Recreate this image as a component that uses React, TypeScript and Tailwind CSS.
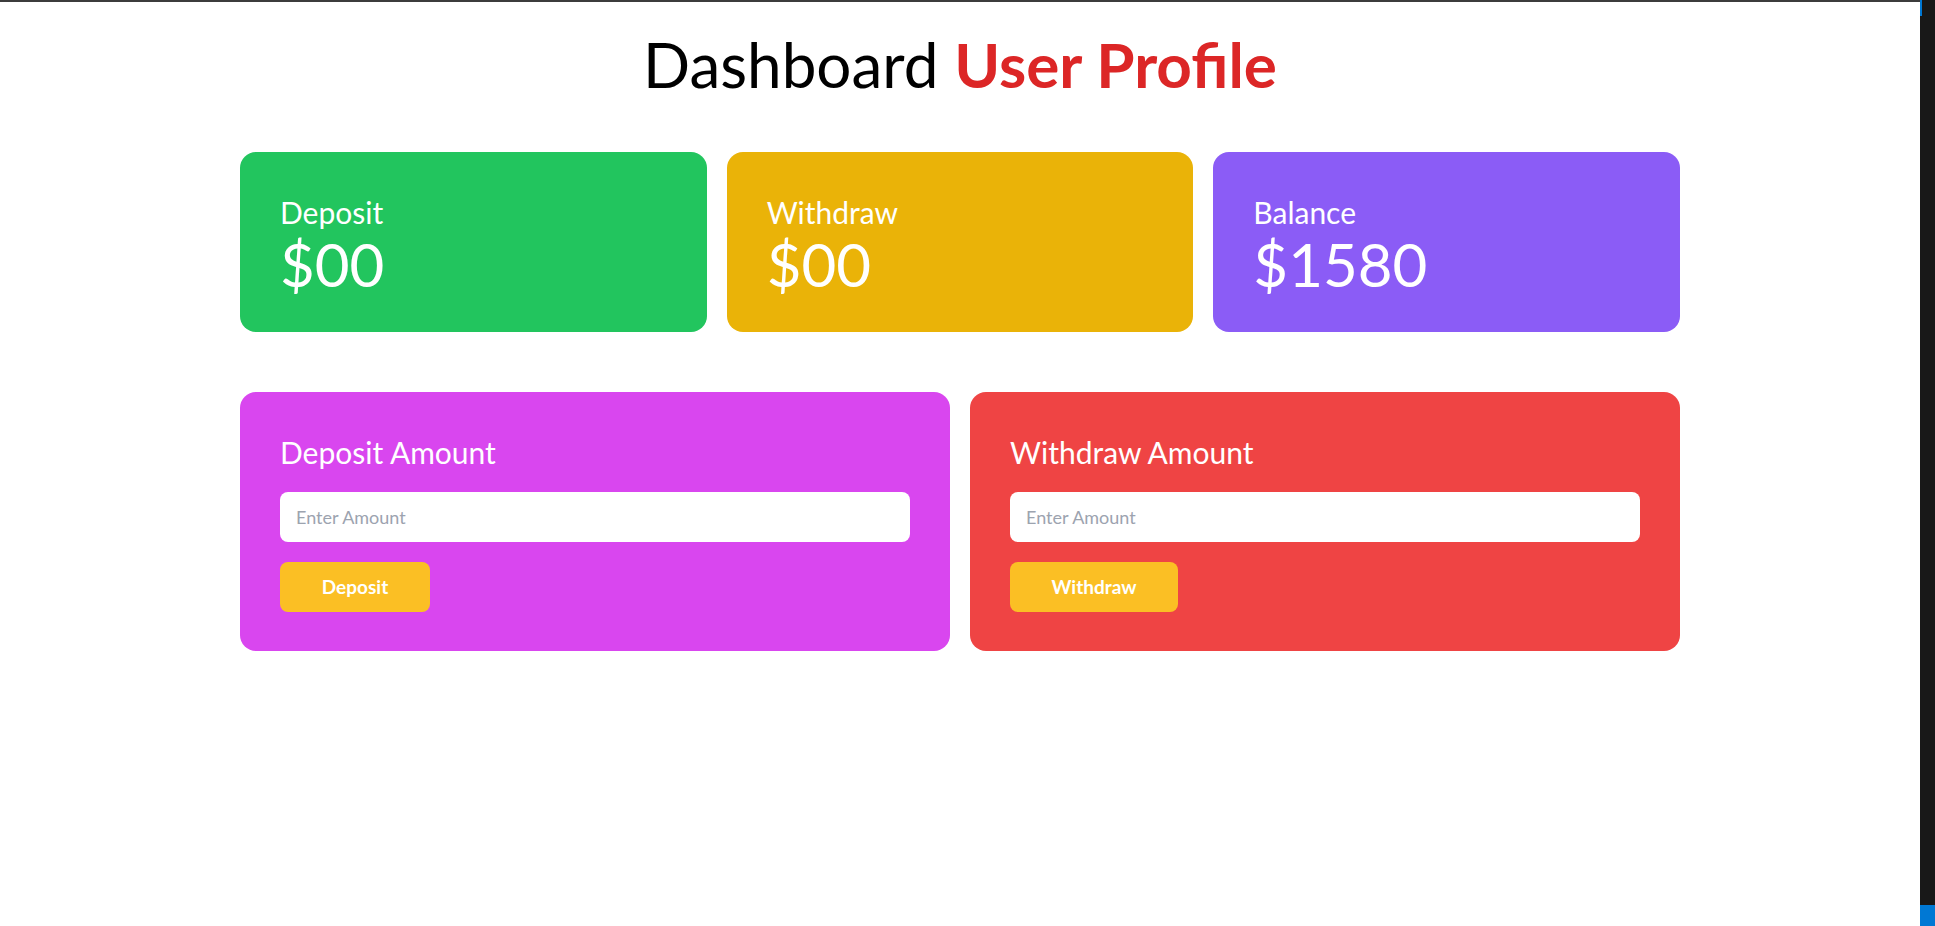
import { useState } from 'react';

const stats = [
  { label: 'Deposit', value: '$00', color: 'bg-[#22c55e]' },
  { label: 'Withdraw', value: '$00', color: 'bg-[#eab308]' },
  { label: 'Balance', value: '$1580', color: 'bg-[#8b5cf6]' },
];

export default function App() {
  const [deposit, setDeposit] = useState('');
  const [withdraw, setWithdraw] = useState('');

  return (
    <div className="flex min-h-screen font-['Lato',sans-serif]">
      <div className="flex-1 bg-white">
        <div className="h-[2px] bg-[#3c3c3c]"></div>
        <h1 className="mt-[31px] text-center text-[62px] leading-none text-black">
          Dashboard <span className="font-bold text-[#dc2626]">User Profile</span>
        </h1>

        <div className="mx-auto mt-[57px] w-[1440px]">
          <div className="grid grid-cols-3 gap-5">
            {stats.map((s) => (
              <div key={s.label} className={`${s.color} h-[180px] rounded-2xl px-10 pt-[42px] text-white`}>
                <div className="text-3xl leading-9">{s.label}</div>
                <div className="mt-1 text-6xl leading-none">{s.value}</div>
              </div>
            ))}
          </div>

          <div className="mt-[60px] grid grid-cols-2 gap-5">
            <div className="rounded-2xl bg-[#d946ef] px-10 pt-[42px] pb-[39px]">
              <h2 className="text-3xl leading-9 text-white">Deposit Amount</h2>
              <input
                value={deposit}
                onChange={(e) => setDeposit(e.target.value)}
                placeholder="Enter Amount"
                className="mt-[22px] block h-[50px] w-full rounded-lg bg-white px-4 text-lg text-gray-700 outline-none placeholder:text-[#9ca3af]"
              />
              <button className="mt-5 h-[50px] w-[150px] rounded-lg bg-[#fbbf24] text-[19px] font-bold text-white">
                Deposit
              </button>
            </div>

            <div className="rounded-2xl bg-[#ef4444] px-10 pt-[42px] pb-[39px]">
              <h2 className="text-3xl leading-9 text-white">Withdraw Amount</h2>
              <input
                value={withdraw}
                onChange={(e) => setWithdraw(e.target.value)}
                placeholder="Enter Amount"
                className="mt-[22px] block h-[50px] w-full rounded-lg bg-white px-4 text-lg text-gray-700 outline-none placeholder:text-[#9ca3af]"
              />
              <button className="mt-5 h-[50px] w-[168px] rounded-lg bg-[#fbbf24] text-[19px] font-bold text-white">
                Withdraw
              </button>
            </div>
          </div>
        </div>
      </div>

      {/* editor strip on the right edge */}
      <div className="flex w-[15px] flex-col justify-between bg-[#181818]">
        <div className="h-4 w-[2px] bg-[#0078d4]"></div>
        <div className="h-[21px] bg-[#0078d4]"></div>
      </div>
    </div>
  );
}
